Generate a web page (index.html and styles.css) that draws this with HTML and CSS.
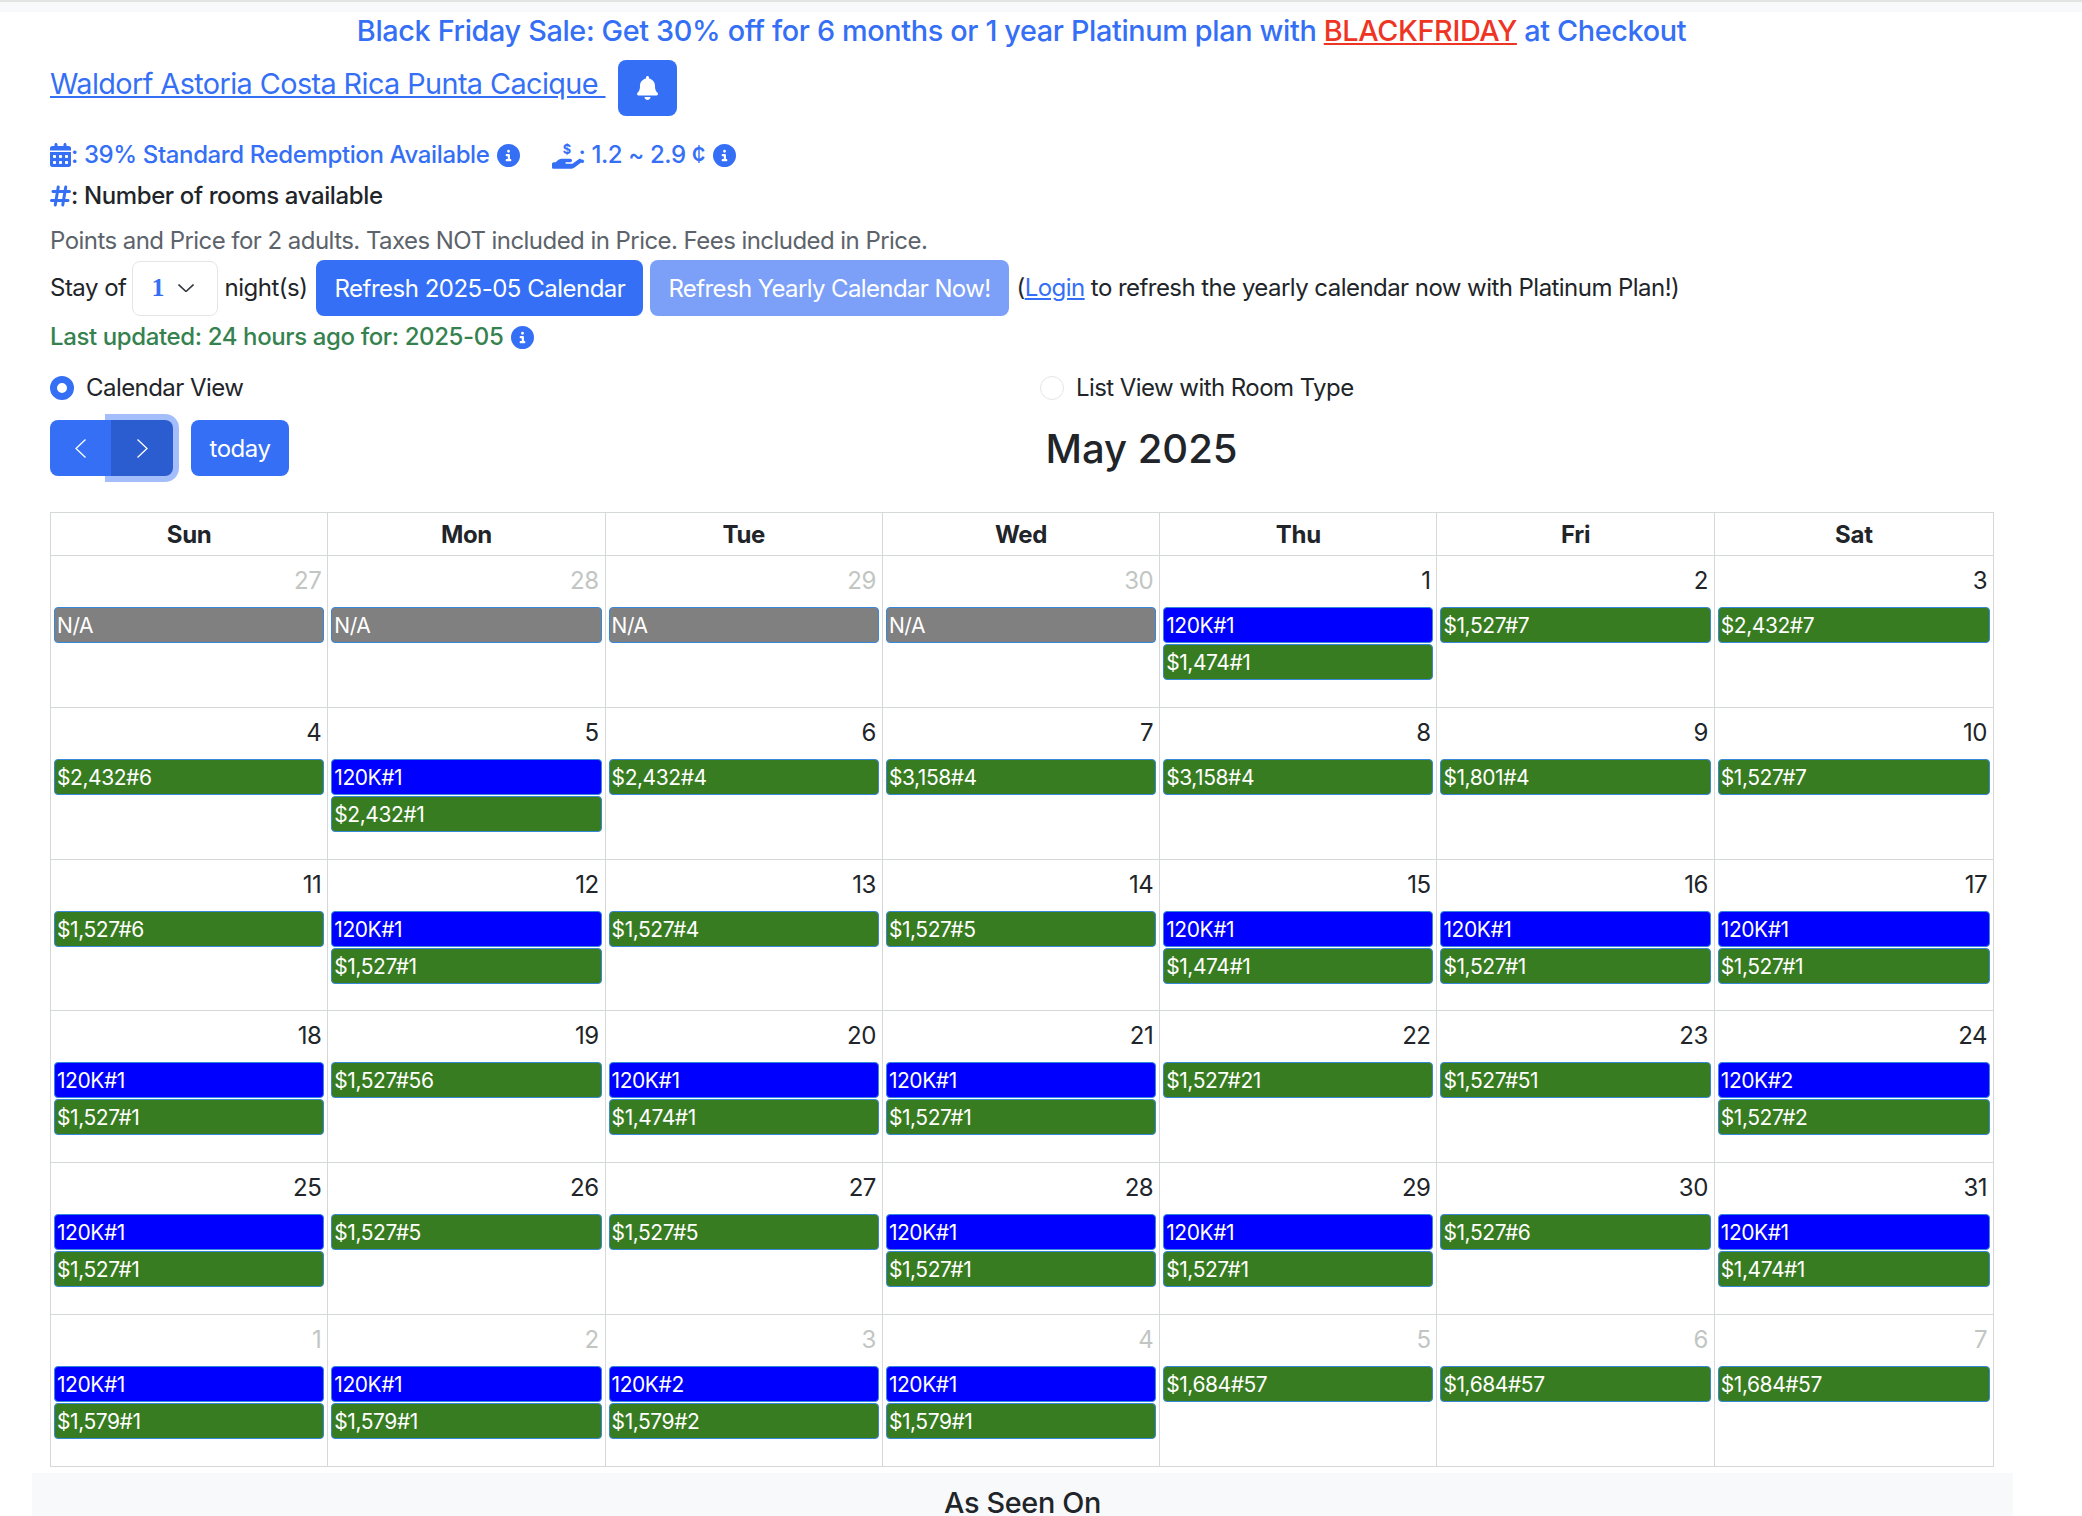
FILE: index.html
```html
<!DOCTYPE html>
<html lang="en">
<head>
  <meta charset="UTF-8">
  <title>Waldorf Astoria Costa Rica Punta Cacique</title>
  <link rel="stylesheet" href="styles.css">
</head>
<body>
  <div class="top-strip"></div>

  <main class="page">
    <h5 class="promo">Black Friday Sale: Get 30% off for 6 months or 1 year Platinum plan with <a href="#" class="promo-code">BLACKFRIDAY</a> at Checkout</h5>

    <div class="hotel-title">
      <a href="#" class="hotel-link">Waldorf Astoria Costa Rica Punta Cacique&nbsp;</a>
      <button class="btn btn-bell" aria-label="Alert">
        <svg class="icon-bell" viewBox="0 0 448 512"><path d="M224 0c-17.7 0-32 14.3-32 32V51.2C119 66 64 130.6 64 208v18.8c0 47-17.3 92.4-48.5 127.6l-7.4 8.3c-8.4 9.4-10.4 22.9-5.3 34.4S19.4 416 32 416H416c12.6 0 24-7.4 29.2-18.9s3.1-25-5.3-34.4l-7.4-8.3C401.3 319.2 384 273.9 384 226.8V208c0-77.4-55-142-128-156.8V32c0-17.7-14.3-32-32-32zm45.3 493.3c12-12 18.7-28.3 18.7-45.3H224 160c0 17 6.7 33.3 18.7 45.3s28.3 18.7 45.3 18.7s33.3-6.7 45.3-18.7z"/></svg>
      </button>
    </div>

    <div class="info-line info-blue">
      <svg class="icon-cal" viewBox="0 0 448 512"><path d="M128 0c17.7 0 32 14.3 32 32V64H288V32c0-17.7 14.3-32 32-32s32 14.3 32 32V64h48c26.5 0 48 21.5 48 48v48H0V112C0 85.5 21.5 64 48 64H96V32c0-17.7 14.3-32 32-32zM0 192H448V464c0 26.5-21.5 48-48 48H48c-26.5 0-48-21.5-48-48V192zm64 80v32c0 8.8 7.2 16 16 16h32c8.8 0 16-7.2 16-16V272c0-8.8-7.2-16-16-16H80c-8.8 0-16 7.2-16 16zm128 0v32c0 8.8 7.2 16 16 16h32c8.8 0 16-7.2 16-16V272c0-8.8-7.2-16-16-16H208c-8.8 0-16 7.2-16 16zm144-16c-8.8 0-16 7.2-16 16v32c0 8.8 7.2 16 16 16h32c8.8 0 16-7.2 16-16V272c0-8.8-7.2-16-16-16H336zM64 400v32c0 8.8 7.2 16 16 16h32c8.8 0 16-7.2 16-16V400c0-8.8-7.2-16-16-16H80c-8.8 0-16 7.2-16 16zm144-16c-8.8 0-16 7.2-16 16v32c0 8.8 7.2 16 16 16h32c8.8 0 16-7.2 16-16V400c0-8.8-7.2-16-16-16H208c-8.8 0-16 7.2-16 16zm112 16v32c0 8.8 7.2 16 16 16h32c8.8 0 16-7.2 16-16V400c0-8.8-7.2-16-16-16H336c-8.8 0-16 7.2-16 16z"/></svg><span>: 39% Standard Redemption Available</span>
      <svg class="icon-info" viewBox="0 0 512 512"><path d="M256 512A256 256 0 1 0 256 0a256 256 0 1 0 0 512zM216 336h24V272H216c-13.3 0-24-10.7-24-24s10.7-24 24-24h48c13.3 0 24 10.7 24 24v88h8c13.3 0 24 10.7 24 24s-10.7 24-24 24H216c-13.3 0-24-10.7-24-24s10.7-24 24-24zm40-208a32 32 0 1 1 0 64 32 32 0 1 1 0-64z"/></svg>
      <svg class="icon-hand" viewBox="0 0 576 512"><text x="288" y="225" class="icon-hand-dollar">$</text><path d="M559.7 392.2c17.8-13.1 21.6-38.1 8.5-55.9s-38.1-21.6-55.9-8.5L392.6 416H272c-8.8 0-16-7.2-16-16s7.2-16 16-16h16 64c17.7 0 32-14.3 32-32s-14.3-32-32-32H288 272 193.7c-29.1 0-57.3 9.9-80 28L68.8 384H32c-17.7 0-32 14.3-32 32v64c0 17.7 14.3 32 32 32H192 352.5c29 0 57.3-9.3 80.7-26.5l126.6-93.3z"/></svg><span class="rate">: 1.2 ~ 2.9 ¢</span>
      <svg class="icon-info" viewBox="0 0 512 512"><path d="M256 512A256 256 0 1 0 256 0a256 256 0 1 0 0 512zM216 336h24V272H216c-13.3 0-24-10.7-24-24s10.7-24 24-24h48c13.3 0 24 10.7 24 24v88h8c13.3 0 24 10.7 24 24s-10.7 24-24 24H216c-13.3 0-24-10.7-24-24s10.7-24 24-24zm40-208a32 32 0 1 1 0 64 32 32 0 1 1 0-64z"/></svg>
    </div>

    <div class="info-line rooms-line">
      <svg class="icon-hash" viewBox="0 0 448 512"><path d="M181.3 32.4c17.4 2.9 29.2 19.4 26.3 36.8L197.8 128h95.1l11.5-69.3c2.9-17.4 19.4-29.2 36.8-26.3s29.2 19.4 26.3 36.8L357.8 128H416c17.7 0 32 14.3 32 32s-14.3 32-32 32H347.1L325.8 320H384c17.7 0 32 14.3 32 32s-14.3 32-32 32H315.1l-11.5 69.3c-2.9 17.4-19.4 29.2-36.8 26.3s-29.2-19.4-26.3-36.8l9.8-58.7H155.1l-11.5 69.3c-2.9 17.4-19.4 29.2-36.8 26.3s-29.2-19.4-26.3-36.8L90.2 384H32c-17.7 0-32-14.3-32-32s14.3-32 32-32H100.9l21.3-128H64c-17.7 0-32-14.3-32-32s14.3-32 32-32h68.9l11.5-69.3c2.9-17.4 19.4-29.2 36.8-26.3zM187.1 192L165.8 320h95.1l21.3-128H187.1z"/></svg><span>: Number of rooms available</span>
    </div>

    <p class="note">Points and Price for 2 adults. Taxes NOT included in Price. Fees included in Price.</p>

    <div class="refresh-row">
      <span>Stay of</span>
      <div class="nights-select"><span>1</span><svg class="select-chevron" viewBox="0 0 16 8"><path d="M.5 .5L8 7.5l7.5-7"/></svg></div>
      <span>night(s)</span>
      <button class="btn btn-refresh">Refresh 2025-05 Calendar</button>
      <button class="btn btn-refresh btn-disabled">Refresh Yearly Calendar Now!</button>
      <span class="login-hint">(<a href="#">Login</a> to refresh the yearly calendar now with Platinum Plan!)</span>
    </div>

    <div class="info-line updated-line">
      <span>Last updated: 24 hours ago for: 2025-05</span>
      <svg class="icon-info" viewBox="0 0 512 512"><path d="M256 512A256 256 0 1 0 256 0a256 256 0 1 0 0 512zM216 336h24V272H216c-13.3 0-24-10.7-24-24s10.7-24 24-24h48c13.3 0 24 10.7 24 24v88h8c13.3 0 24 10.7 24 24s-10.7 24-24 24H216c-13.3 0-24-10.7-24-24s10.7-24 24-24zm40-208a32 32 0 1 1 0 64 32 32 0 1 1 0-64z"/></svg>
    </div>

    <div class="view-switch">
      <label class="view-option"><span class="radio radio-on"></span>Calendar View</label>
      <label class="view-option"><span class="radio"></span>List View with Room Type</label>
    </div>

    <div class="cal-toolbar">
      <div class="cal-nav">
        <div class="btn-group">
          <button class="btn btn-nav" aria-label="prev"><svg viewBox="0 0 11 19"><path d="M10.5 .5l-9.5 9 9.5 9"/></svg></button>
          <button class="btn btn-nav btn-nav-focus" aria-label="next"><svg viewBox="0 0 11 19"><path d="M.5 .5l9.5 9-9.5 9"/></svg></button>
        </div>
        <button class="btn btn-today">today</button>
      </div>
      <h2 class="cal-title">May 2025</h2>
      <div></div>
    </div>

    <table class="calendar">
      <thead>
        <tr><th>Sun</th><th>Mon</th><th>Tue</th><th>Wed</th><th>Thu</th><th>Fri</th><th>Sat</th></tr>
      </thead>
      <tbody>
        <tr>
          <td class="other"><div class="day">27</div><div class="ev ev-na">N/A</div></td>
          <td class="other"><div class="day">28</div><div class="ev ev-na">N/A</div></td>
          <td class="other"><div class="day">29</div><div class="ev ev-na">N/A</div></td>
          <td class="other"><div class="day">30</div><div class="ev ev-na">N/A</div></td>
          <td><div class="day">1</div><div class="ev ev-pts">120K#1</div><div class="ev ev-cash">$1,474#1</div></td>
          <td><div class="day">2</div><div class="ev ev-cash">$1,527#7</div></td>
          <td><div class="day">3</div><div class="ev ev-cash">$2,432#7</div></td>
        </tr>
        <tr>
          <td><div class="day">4</div><div class="ev ev-cash">$2,432#6</div></td>
          <td><div class="day">5</div><div class="ev ev-pts">120K#1</div><div class="ev ev-cash">$2,432#1</div></td>
          <td><div class="day">6</div><div class="ev ev-cash">$2,432#4</div></td>
          <td><div class="day">7</div><div class="ev ev-cash">$3,158#4</div></td>
          <td><div class="day">8</div><div class="ev ev-cash">$3,158#4</div></td>
          <td><div class="day">9</div><div class="ev ev-cash">$1,801#4</div></td>
          <td><div class="day">10</div><div class="ev ev-cash">$1,527#7</div></td>
        </tr>
        <tr>
          <td><div class="day">11</div><div class="ev ev-cash">$1,527#6</div></td>
          <td><div class="day">12</div><div class="ev ev-pts">120K#1</div><div class="ev ev-cash">$1,527#1</div></td>
          <td><div class="day">13</div><div class="ev ev-cash">$1,527#4</div></td>
          <td><div class="day">14</div><div class="ev ev-cash">$1,527#5</div></td>
          <td><div class="day">15</div><div class="ev ev-pts">120K#1</div><div class="ev ev-cash">$1,474#1</div></td>
          <td><div class="day">16</div><div class="ev ev-pts">120K#1</div><div class="ev ev-cash">$1,527#1</div></td>
          <td><div class="day">17</div><div class="ev ev-pts">120K#1</div><div class="ev ev-cash">$1,527#1</div></td>
        </tr>
        <tr>
          <td><div class="day">18</div><div class="ev ev-pts">120K#1</div><div class="ev ev-cash">$1,527#1</div></td>
          <td><div class="day">19</div><div class="ev ev-cash">$1,527#56</div></td>
          <td><div class="day">20</div><div class="ev ev-pts">120K#1</div><div class="ev ev-cash">$1,474#1</div></td>
          <td><div class="day">21</div><div class="ev ev-pts">120K#1</div><div class="ev ev-cash">$1,527#1</div></td>
          <td><div class="day">22</div><div class="ev ev-cash">$1,527#21</div></td>
          <td><div class="day">23</div><div class="ev ev-cash">$1,527#51</div></td>
          <td><div class="day">24</div><div class="ev ev-pts">120K#2</div><div class="ev ev-cash">$1,527#2</div></td>
        </tr>
        <tr>
          <td><div class="day">25</div><div class="ev ev-pts">120K#1</div><div class="ev ev-cash">$1,527#1</div></td>
          <td><div class="day">26</div><div class="ev ev-cash">$1,527#5</div></td>
          <td><div class="day">27</div><div class="ev ev-cash">$1,527#5</div></td>
          <td><div class="day">28</div><div class="ev ev-pts">120K#1</div><div class="ev ev-cash">$1,527#1</div></td>
          <td><div class="day">29</div><div class="ev ev-pts">120K#1</div><div class="ev ev-cash">$1,527#1</div></td>
          <td><div class="day">30</div><div class="ev ev-cash">$1,527#6</div></td>
          <td><div class="day">31</div><div class="ev ev-pts">120K#1</div><div class="ev ev-cash">$1,474#1</div></td>
        </tr>
        <tr>
          <td class="other"><div class="day">1</div><div class="ev ev-pts">120K#1</div><div class="ev ev-cash">$1,579#1</div></td>
          <td class="other"><div class="day">2</div><div class="ev ev-pts">120K#1</div><div class="ev ev-cash">$1,579#1</div></td>
          <td class="other"><div class="day">3</div><div class="ev ev-pts">120K#2</div><div class="ev ev-cash">$1,579#2</div></td>
          <td class="other"><div class="day">4</div><div class="ev ev-pts">120K#1</div><div class="ev ev-cash">$1,579#1</div></td>
          <td class="other"><div class="day">5</div><div class="ev ev-cash">$1,684#57</div></td>
          <td class="other"><div class="day">6</div><div class="ev ev-cash">$1,684#57</div></td>
          <td class="other"><div class="day">7</div><div class="ev ev-cash">$1,684#57</div></td>
        </tr>
      </tbody>
    </table>
  </main>

  <section class="seen-on">
    <h5>As Seen On</h5>
  </section>
</body>
</html>
```

FILE: styles.css
```css
:root {
  --primary: #356ff6;
  --primary-dark: #2b5cd0;
  --primary-light: #7c9ff8;
  --text: #212529;
  --grid: #d5d8d8;
}
* {
  box-sizing: border-box;
}
html, body {
  height: 1516px;
  overflow: hidden;
}
body {
  margin: 0;
  font-family: Inter, "Liberation Sans", sans-serif;
  font-size: 24px;
  line-height: 36px;
  letter-spacing: -0.5px;
  color: var(--text);
  background-color: #fff;
}
a {
  color: var(--primary);
}
button {
  font-family: inherit;
  letter-spacing: inherit;
}
.top-strip {
  height: 12px;
  background-color: #f8f9fa;
  border-top: 2px solid #e1e4e3;
}
.page {
  padding: 0 88px 0 50px;
}

/* Header lines */
.promo {
  margin: 0;
  padding-top: 1px;
  height: 44px;
  font-size: 28.8px;
  line-height: 36px;
  font-weight: 500;
  letter-spacing: -0.35px;
  text-align: center;
  color: var(--primary);
  width: 1943px;
}
.promo-code {
  color: #ee3524;
}
.hotel-title {
  display: flex;
  align-items: flex-start;
  height: 56px;
  margin-top: 4px;
  font-size: 28.8px;
  letter-spacing: -0.58px;
}
.hotel-link {
  line-height: 48px;
}
.btn {
  display: flex;
  align-items: center;
  justify-content: center;
  border: none;
  border-radius: 8px;
  color: #fff;
  background-color: var(--primary);
  font-size: 24px;
  cursor: pointer;
}
.btn-bell {
  width: 59px;
  height: 56px;
  margin-left: 12px;
}
.icon-bell {
  width: 21px;
  height: 24px;
  fill: #fff;
}
.info-line {
  display: flex;
  align-items: center;
  font-weight: 500;
  letter-spacing: -0.38px;
}
.info-blue {
  margin-top: 21px;
  color: var(--primary);
}
.info-blue svg, .updated-line svg, .icon-hash {
  fill: var(--primary);
}
.icon-cal, .icon-hash {
  width: 21px;
  height: 24px;
}
.icon-info {
  width: 23px;
  height: 23px;
  margin-left: 8px;
}
.icon-hand {
  width: 30px;
  height: 27px;
  margin-left: 32px;
  overflow: visible;
}
.icon-hand-dollar {
  font-size: 245px;
  font-weight: 700;
  text-anchor: middle;
}
.rate {
  margin-left: -4px;
}
.rooms-line {
  margin-top: 5px;
}
.note {
  margin: 9px 0 0;
  color: #5c636a;
  letter-spacing: -0.55px;
}
.refresh-row {
  display: flex;
  align-items: center;
  height: 56px;
  margin-top: 1px;
  white-space: nowrap;
}
.nights-select {
  display: flex;
  align-items: center;
  width: 86px;
  height: 55px;
  margin: 0 7px 0 5px;
  padding-left: 19px;
  border: 1px solid #e3e6e8;
  border-radius: 8px;
  color: var(--primary);
  font-family: "Liberation Serif", serif;
  font-size: 26px;
  font-weight: 700;
}
.select-chevron {
  width: 16px;
  height: 8px;
  margin-left: 14px;
  fill: none;
  stroke: #343a40;
  stroke-width: 1.6;
}
.btn-refresh {
  height: 56px;
  padding: 0 18px;
  margin-left: 9px;
  white-space: nowrap;
}
.btn-disabled {
  margin-left: 7px;
  background-color: var(--primary-light);
  letter-spacing: -0.62px;
}
.login-hint {
  margin-left: 8px;
  letter-spacing: -0.55px;
}
.updated-line {
  margin-top: 3px;
  color: #35824f;
}

/* Calendar / list switch */
.view-switch {
  display: grid;
  grid-template-columns: 990px 1fr;
  margin-top: 15px;
}
.view-option {
  display: flex;
  align-items: center;
  letter-spacing: -0.56px;
}
.radio {
  width: 24px;
  height: 24px;
  margin-right: 12px;
  border: 1px solid #e3e6e8;
  border-radius: 50%;
}
.radio-on {
  border: 7px solid var(--primary);
}

/* Calendar toolbar */
.cal-toolbar {
  display: flex;
  align-items: center;
  justify-content: space-between;
  height: 56px;
  margin-top: 14px;
}
.cal-nav {
  display: flex;
  gap: 18px;
}
.btn-group {
  display: flex;
}
.btn-nav {
  width: 61px;
  height: 56px;
  padding: 0;
  border-radius: 8px 0 0 8px;
}
.btn-nav svg {
  width: 11px;
  height: 19px;
  fill: none;
  stroke: #fff;
  stroke-width: 1.3;
}
.btn-nav-focus {
  position: relative;
  width: 62px;
  border-radius: 0 8px 8px 0;
  background-color: var(--primary-dark);
  box-shadow: 0 0 0 6px rgba(53, 111, 246, 0.45);
}
.btn-today {
  width: 98px;
  height: 56px;
}
.cal-title {
  margin: 2px 0 0;
  font-size: 40px;
  line-height: 48px;
  font-weight: 500;
  letter-spacing: 0;
}

/* Month grid */
.calendar {
  width: 1944px;
  margin-top: 36px;
  border-collapse: collapse;
  table-layout: fixed;
}
.calendar th, .calendar td {
  border: 1px solid var(--grid);
}
.calendar th {
  width: 277.3px;
  height: 43px;
  padding: 2px 0 0;
  font-weight: 700;
  line-height: 36px;
  letter-spacing: -0.3px;
}
.calendar th:last-child {
  width: auto;
}
.calendar td {
  height: 151.8px;
  padding: 0 3px;
  vertical-align: top;
}
.day {
  height: 51px;
  padding: 7px 3px 0 0;
  text-align: right;
}
.other .day {
  color: #c2c6c3;
}
.ev {
  height: 36px;
  margin-bottom: 1px;
  padding-left: 2px;
  border: 1px solid #3788d8;
  border-radius: 4px;
  color: #fff;
  font-size: 21px;
  line-height: 35px;
  letter-spacing: -0.44px;
  white-space: nowrap;
}
.ev-na {
  background-color: #808080;
}
.ev-pts {
  background-color: #0000ff;
}
.ev-cash {
  background-color: #387c21;
}

/* Press strip */
.seen-on {
  width: 1981px;
  margin: 6px 0 0 32px;
  background-color: #f8f9fa;
  padding-top: 16px;
  height: 44px;
  text-align: center;
}
.seen-on h5 {
  margin: 0;
  font-size: 28.8px;
  line-height: 28px;
  font-weight: 500;
  letter-spacing: -0.35px;
}
```
